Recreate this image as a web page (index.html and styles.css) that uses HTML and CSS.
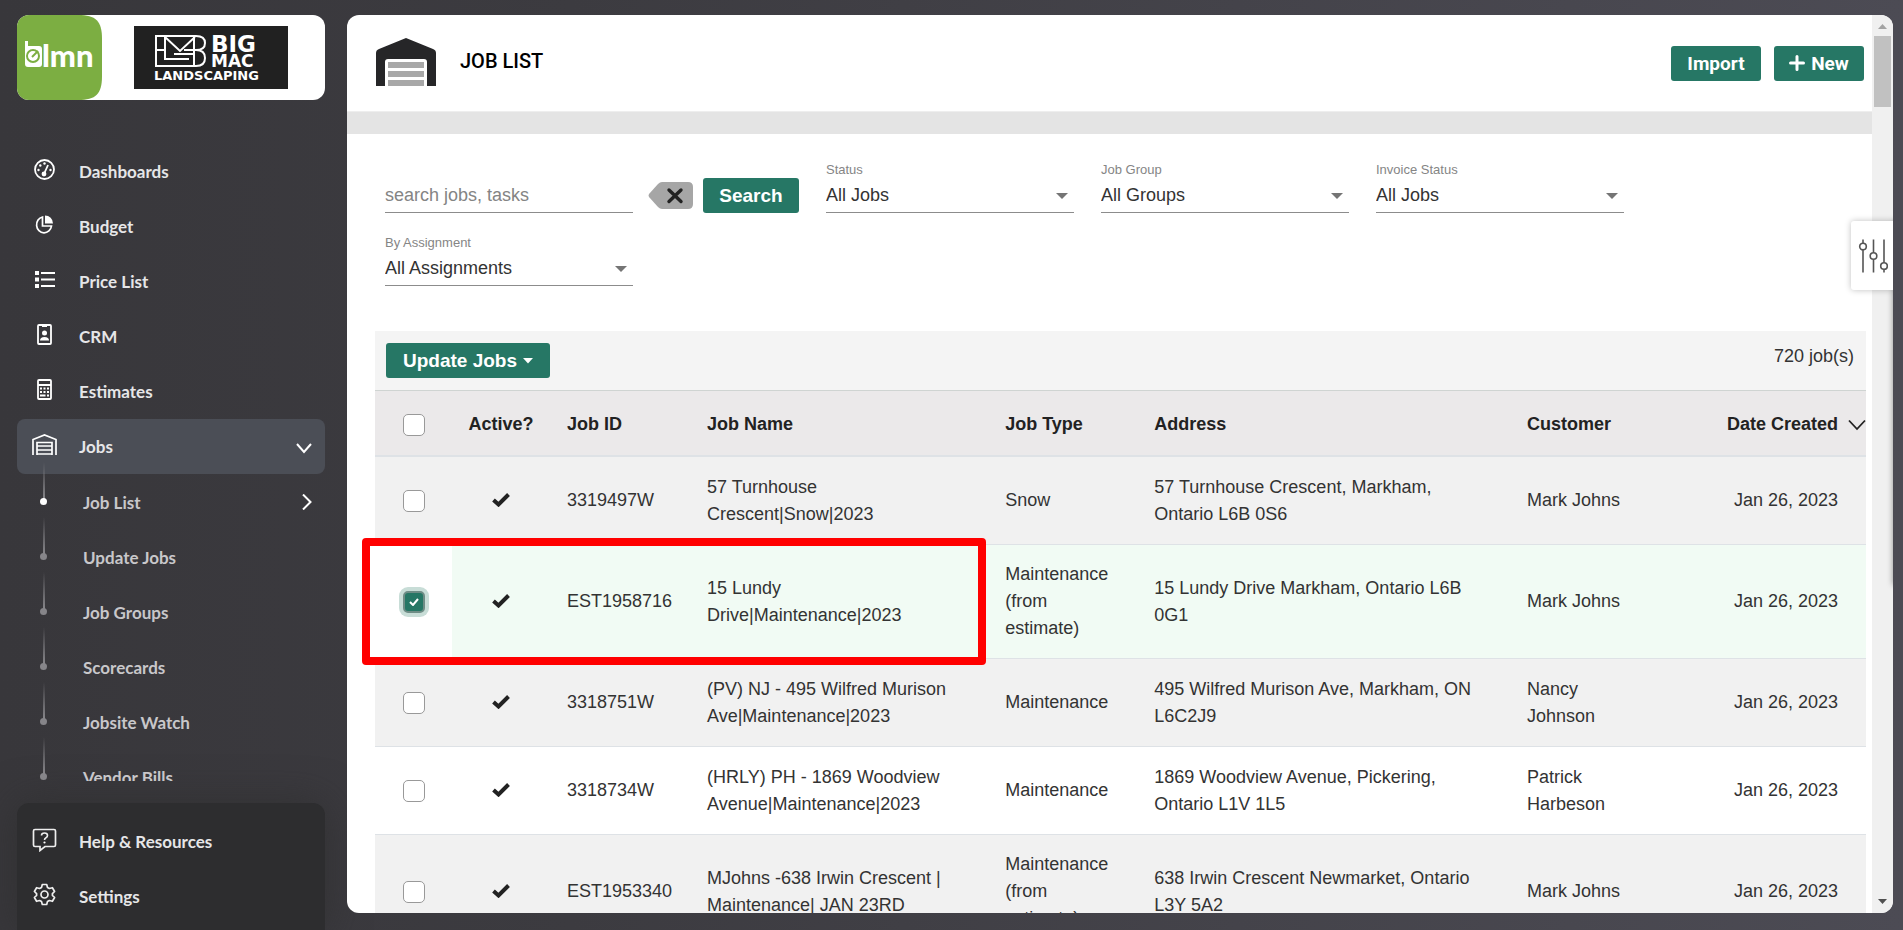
FILE: index.html
```html
<!DOCTYPE html>
<html lang="en">
<head>
    <meta charset="UTF-8">
    <meta name="viewport" content="width=device-width, initial-scale=1.0">
    <title>Job List</title>
    <link rel="stylesheet" href="styles.css">
</head>
<body>
    <div class="sidebar">
        <div class="brand">
            <svg class="brand-lmn" viewBox="0 0 85 85" role="img" aria-label="LMN">
                <path d="M0 0H61C79 0 85 6 85 24V61C85 79 79 85 61 85H0Z" fill="#7cae42"/>
                <path d="M8 26h3v5h11q3 0 3 3v15q0 3-3 3H11q-3 0-3-3z" fill="#fff"/>
                <circle cx="16" cy="41" r="6" fill="none" stroke="#7cae42" stroke-width="2"/>
                <path d="M15 42l6-6" stroke="#7cae42" stroke-width="2"/>
                <text x="25" y="52" class="lmn-text">lmn</text>
            </svg>
            <div class="brand-company">
                <svg width="154" height="63" viewBox="0 0 154 63" role="img" aria-label="Big Mac Landscaping">
                    <rect width="154" height="63" fill="#212121"/>
                    <g fill="none" stroke="#fff" stroke-width="2">
                        <path d="M22 10H62Q71 10 71 17T62 24Q71 24 71 32T62 40H22Z"/>
                        <path d="M22 24H31M50 24H62M31 10V33H55M40 28H60M60 10V40M31 11L46 25L61 11"/>
                    </g>
                    <text x="77" y="26" class="co-big">BIG</text>
                    <text x="77" y="41" class="co-mac">MAC</text>
                    <text x="20" y="54" class="co-land">LANDSCAPING</text>
                </svg>
            </div>
        </div>

        <nav class="menu">
            <a class="menu-item" href="#">
                <svg viewBox="0 0 25 25" class="menu-icon"><circle cx="12.5" cy="12.5" r="9.5" fill="none" stroke="#fff" stroke-width="1.8"/><circle cx="12" cy="17" r="2.4"/><path d="M12 17L16 8" stroke="#fff" stroke-width="1.8"/><circle cx="6.5" cy="13" r="1.2"/><circle cx="8.3" cy="8.5" r="1.2"/><circle cx="12.5" cy="6.5" r="1.2"/><circle cx="18.5" cy="13" r="1.2"/></svg>
                <span>Dashboards</span>
            </a>
            <a class="menu-item" href="#">
                <svg viewBox="0 0 25 25" class="menu-icon"><path d="M13 3.5a8 8 0 0 1 8 8h-8z"/><path d="M10.5 5A7.5 8 0 1 0 19.5 14H10.5z" fill="none" stroke="#fff" stroke-width="1.7"/></svg>
                <span>Budget</span>
            </a>
            <a class="menu-item" href="#">
                <svg viewBox="0 0 25 25" class="menu-icon"><path d="M3 4h4v4H3zM3 10.5h4v4H3zM3 17h4v4H3zM9 5h14v2H9zM9 11.5h14v2H9zM9 18h14v2H9z"/></svg>
                <span>Price List</span>
            </a>
            <a class="menu-item" href="#">
                <svg viewBox="0 0 25 25" class="menu-icon"><rect x="6" y="3" width="13" height="19" rx="1" fill="none" stroke="#fff" stroke-width="1.8"/><path d="M10 3h5v2h-5z"/><circle cx="12.5" cy="11" r="2.5"/><path d="M8 18.5q0-3.5 4.5-3.5t4.5 3.5z"/></svg>
                <span>CRM</span>
            </a>
            <a class="menu-item" href="#">
                <svg viewBox="0 0 25 25" class="menu-icon"><rect x="6" y="3" width="13" height="19" rx="1" fill="none" stroke="#fff" stroke-width="1.8"/><path d="M6 7h13v2H6zM8 10.5h2v2H8zM11.5 10.5h2v2h-2zM15 10.5h2v2h-2zM8 14h2v2H8zM11.5 14h2v2h-2zM15 14h2v2h-2zM8 17.5h5.5v2H8zM15 17.5h2v2h-2z"/></svg>
                <span>Estimates</span>
            </a>
            <a class="menu-item active" href="#">
                <svg viewBox="0 0 25 25" class="menu-icon"><path d="M1 23V7.5L12.5 3L24 7.5V23M5 23V10.5h15V23M5 14h15M5 18h15M5 22h15" fill="none" stroke="#fff" stroke-width="1.7"/></svg>
                <span>Jobs</span>
                <svg viewBox="0 0 16 16" class="menu-arrow"><path d="M1 5L8 13L15 5"/></svg>
            </a>
            <ul class="submenu">
                <li class="current"><a href="#">Job List</a><svg viewBox="0 0 16 16" class="menu-arrow"><path d="M7 0.5L14.5 8L7 15.5"/></svg></li>
                <li><a href="#">Update Jobs</a></li>
                <li><a href="#">Job Groups</a></li>
                <li><a href="#">Scorecards</a></li>
                <li><a href="#">Jobsite Watch</a></li>
                <li><a href="#">Vendor Bills</a></li>
            </ul>
        </nav>

        <div class="menu-footer">
            <a class="menu-item" href="#">
                <svg viewBox="0 0 25 25" class="menu-icon"><path d="M3 2.5h19q1.5 0 1.5 1.5v14q0 1.5-1.5 1.5H13l-5 4v-4H3q-1.5 0-1.5-1.5V4q0-1.5 1.5-1.5z" fill="none" stroke="#eee" stroke-width="1.7"/><path d="M9.5 8.5q0-2.5 3-2.5t3 2.5q0 1.5-1.5 2.2t-1.5 2.3" fill="none" stroke="#eee" stroke-width="1.6"/><circle cx="12.5" cy="15.5" r="1.1"/></svg>
                <span>Help &amp; Resources</span>
            </a>
            <a class="menu-item" href="#">
                <svg viewBox="0 0 25 25" class="menu-icon"><path d="M10.3 2.5h4.4l.8 2.9 1.9 1.1 3-.8 2.2 3.8-2.2 2.1v1.8l2.2 2.1-2.2 3.8-3-.8-1.9 1.1-.8 2.9h-4.4l-.8-2.9-1.9-1.1-3 .8-2.2-3.8 2.2-2.1v-1.8L2.4 9.5l2.2-3.800 3 .8 1.900-1.100z" fill="none" stroke="#eee" stroke-width="1.7" stroke-linejoin="round"/><circle cx="12.5" cy="12.5" r="3.5" fill="none" stroke="#eee" stroke-width="1.7"/></svg>
                <span>Settings</span>
            </a>
        </div>
    </div>

    <div class="main-content">
        <div class="page">
            <div class="page-header">
                <svg class="page-icon" viewBox="0 0 60 48"><path d="M0 48V15q0-3 3-4L30 0l27 11q3 1 3 4v33h-9V24q0-3-3-3H12q-3 0-3 3v24z" fill="#262628"/><path d="M12 24h36v6H12zM12 33h36v6H12zM12 42h36v6H12z" fill="#a8a8a8"/></svg>
                <h1>JOB LIST</h1>
                <button type="button" class="btn">Import</button>
                <button type="button" class="btn"><svg width="16" height="16" viewBox="0 0 16 16"><path d="M8 1.5v13M1.5 8h13" stroke="#fff" stroke-width="3" stroke-linecap="round"/></svg> New</button>
            </div>

            <form class="filters">
                <div class="search-group">
                    <input type="text" class="search-input" placeholder="search jobs, tasks" aria-label="Search jobs, tasks">
                    <button type="button" class="clear-search" aria-label="Clear search">
                        <svg width="45" height="27" viewBox="0 0 45 27"><path d="M14 0H40q5 0 5 5V22q0 5-5 5H14q-2 0-4-2L1 15q-1-1.5 0-3L10 2q2-2 4-2z" fill="#a6a6a6"/><path d="M21 8L33 19.5M33 8L21 19.5" stroke="#222" stroke-width="3.4" stroke-linecap="round"/></svg>
                    </button>
                    <button type="button" class="btn">Search</button>
                </div>
                <div class="field">
                    <label for="status">Status</label>
                    <select id="status"><option>All Jobs</option></select>
                </div>
                <div class="field">
                    <label for="jobGroup">Job Group</label>
                    <select id="jobGroup"><option>All Groups</option></select>
                </div>
                <div class="field">
                    <label for="invoiceStatus">Invoice Status</label>
                    <select id="invoiceStatus"><option>All Jobs</option></select>
                </div>
                <div class="field">
                    <label for="assignment">By Assignment</label>
                    <select id="assignment"><option>All Assignments</option></select>
                </div>
            </form>

            <div class="job-list">
                <div class="toolbar">
                    <button type="button" class="btn">Update Jobs <svg width="10" height="6" viewBox="0 0 10 6"><path d="M0 0h10L5 5.5z" fill="#fff"/></svg></button>
                    <span>720 job(s)</span>
                </div>
                <table class="jobs">
                    <thead>
                        <tr>
                            <th class="col-check"><input type="checkbox" aria-label="Select all jobs"></th>
                            <th class="col-active">Active?</th>
                            <th class="col-id">Job ID</th>
                            <th class="col-name">Job Name</th>
                            <th class="col-type">Job Type</th>
                            <th class="col-address">Address</th>
                            <th class="col-customer">Customer</th>
                            <th class="col-date">Date Created<svg width="18" height="12" viewBox="0 0 18 12"><path d="M1 1.5L9 10L17 1.5" fill="none" stroke="#222" stroke-width="1.8"/></svg></th>
                        </tr>
                    </thead>
                    <tbody>
                        <tr>
                            <td class="col-check"><input type="checkbox" aria-label="Select 3319497W"></td>
                            <td class="col-active"><svg class="tick" viewBox="0 0 18 14"><path d="M1.5 7L6.5 11.5L16.5 1.5"/></svg></td>
                            <td>3319497W</td>
                            <td>57 Turnhouse Crescent|Snow|2023</td>
                            <td>Snow</td>
                            <td>57 Turnhouse Crescent, Markham, Ontario L6B 0S6</td>
                            <td>Mark Johns</td>
                            <td class="col-date">Jan 26, 2023</td>
                        </tr>
                        <tr class="selected">
                            <td class="col-check"><input type="checkbox" checked aria-label="Select EST1958716"><span class="callout"></span></td>
                            <td class="col-active"><svg class="tick" viewBox="0 0 18 14"><path d="M1.5 7L6.5 11.5L16.5 1.5"/></svg></td>
                            <td>EST1958716</td>
                            <td>15 Lundy Drive|Maintenance|2023</td>
                            <td>Maintenance (from estimate)</td>
                            <td>15 Lundy Drive Markham, Ontario L6B 0G1</td>
                            <td>Mark Johns</td>
                            <td class="col-date">Jan 26, 2023</td>
                        </tr>
                        <tr>
                            <td class="col-check"><input type="checkbox" aria-label="Select 3318751W"></td>
                            <td class="col-active"><svg class="tick" viewBox="0 0 18 14"><path d="M1.5 7L6.5 11.5L16.5 1.5"/></svg></td>
                            <td>3318751W</td>
                            <td>(PV) NJ - 495 Wilfred Murison Ave|Maintenance|2023</td>
                            <td>Maintenance</td>
                            <td>495 Wilfred Murison Ave, Markham, ON L6C2J9</td>
                            <td>Nancy Johnson</td>
                            <td class="col-date">Jan 26, 2023</td>
                        </tr>
                        <tr>
                            <td class="col-check"><input type="checkbox" aria-label="Select 3318734W"></td>
                            <td class="col-active"><svg class="tick" viewBox="0 0 18 14"><path d="M1.5 7L6.5 11.5L16.5 1.5"/></svg></td>
                            <td>3318734W</td>
                            <td>(HRLY) PH - 1869 Woodview Avenue|Maintenance|2023</td>
                            <td>Maintenance</td>
                            <td>1869 Woodview Avenue, Pickering, Ontario L1V 1L5</td>
                            <td>Patrick Harbeson</td>
                            <td class="col-date">Jan 26, 2023</td>
                        </tr>
                        <tr>
                            <td class="col-check"><input type="checkbox" aria-label="Select EST1953340"></td>
                            <td class="col-active"><svg class="tick" viewBox="0 0 18 14"><path d="M1.5 7L6.5 11.5L16.5 1.5"/></svg></td>
                            <td>EST1953340</td>
                            <td>MJohns -638 Irwin Crescent | Maintenance| JAN 23RD</td>
                            <td>Maintenance (from estimate)</td>
                            <td>638 Irwin Crescent Newmarket, Ontario L3Y 5A2</td>
                            <td>Mark Johns</td>
                            <td class="col-date">Jan 26, 2023</td>
                        </tr>
                    </tbody>
                </table>
            </div>
        </div>

        <div class="scrollbar">
            <svg width="9" height="5" viewBox="0 0 9 5"><path d="M0 5L4.5 0L9 5z" fill="#a3a3a3"/></svg>
            <div class="thumb"></div>
            <svg class="down" width="9" height="5" viewBox="0 0 9 5"><path d="M0 0L4.5 5L9 0z" fill="#505050"/></svg>
        </div>

        <!-- Slide-out panel, closed: only its shadow and tab show -->
        <div class="side-panel"></div>
        <button type="button" class="panel-tab" aria-label="Filters">
            <svg width="30" height="34" viewBox="0 0 30 34"><g fill="none" stroke="#555" stroke-width="1.6"><path d="M5 0.5V4M5 11V33.5M15.5 0.5V13.5M15.5 20.5V33.5M26 0.5V23.5M26 30.5V33.5"/><circle cx="5" cy="7.5" r="3.3"/><circle cx="15.5" cy="17" r="3.3"/><circle cx="26" cy="27" r="3.3"/></g></svg>
        </button>
    </div>
</body>
</html>
```
FILE: styles.css
```css
* {
    box-sizing: border-box;
}

body {
    margin: 0;
    height: 100vh;
    display: flex;
    overflow: hidden;
    font-family: "Liberation Sans", Arial, sans-serif;
    font-size: 18px;
    color: #333333;
    background: linear-gradient(90deg, #38373b 0%, #3c3b40 30%, #4c4b54 100%);
}

button, input, select {
    font-family: inherit;
    font-size: inherit;
    margin: 0;
}

a {
    color: inherit;
    text-decoration: none;
}

/* Sidebar */
.sidebar {
    width: 347px;
    flex: none;
    padding: 15px 22px 0 17px;
    display: flex;
    flex-direction: column;
    font-family: Lato, sans-serif;
    font-size: 17px;
    font-weight: bold;
}

.brand {
    height: 85px;
    flex: none;
    display: flex;
    overflow: hidden;
    background-color: #ffffff;
    border-radius: 12px;
}

.brand-lmn {
    width: 85px;
    height: 85px;
}

.lmn-text {
    font: 900 31px Lato, sans-serif;
    fill: #ffffff;
}

.brand-company {
    flex: 1;
    padding: 11px 0 0 32px;
}

.brand-company text {
    font-family: "DejaVu Sans", sans-serif;
    font-weight: bold;
    fill: #ffffff;
}

.co-big {
    font-size: 23px;
}

.co-mac {
    font-size: 17px;
}

.co-land {
    font-size: 13px;
}

.menu {
    flex: 1;
    min-height: 0;
    margin: 44px 0 22px;
    overflow: hidden;
}

.menu-item {
    height: 55px;
    padding: 0 13px 0 15px;
    display: flex;
    align-items: center;
    gap: 22px;
    color: #e6e6e8;
    border-radius: 8px;
}

.menu-item.active {
    background-color: #4b4e56;
}

.menu-icon {
    width: 25px;
    height: 29px;
    padding-bottom: 4px;
    fill: #ffffff;
}

.menu-arrow {
    width: 16px;
    height: 16px;
    margin-left: auto;
    fill: none;
    stroke: #ffffff;
    stroke-width: 2;
}

.submenu {
    list-style: none;
    margin: 0;
    padding: 0;
}

.submenu li {
    height: 55px;
    padding: 1px 13px 0 66px;
    display: flex;
    align-items: center;
    position: relative;
    color: #c8c7ca;
}

/* Timeline line and dot */
.submenu li::before {
    content: "";
    position: absolute;
    left: 26px;
    top: -12px;
    width: 2px;
    height: 38px;
    background: linear-gradient(rgba(255, 255, 255, 0), #8a898d);
}

.submenu li::after {
    content: "";
    position: absolute;
    left: 23px;
    top: 24px;
    width: 7px;
    height: 7px;
    border-radius: 50%;
    background-color: #868589;
}

.submenu .current::after {
    background-color: #ffffff;
}

.menu-footer {
    height: 127px;
    flex: none;
    padding-top: 11px;
    background-color: #2d2d2f;
    border-radius: 12px 12px 0 0;
    box-shadow: 0 0 40px rgba(45, 45, 45, 0.7);
}

/* Main pane */
.main-content {
    flex: 1;
    min-width: 0;
    margin: 15px 10px 17px 0;
    display: flex;
    position: relative;
    overflow: hidden;
    background-color: #ffffff;
    border-radius: 12px;
}

.page {
    flex: 1;
    min-width: 0;
}

.page-header {
    height: 97px;
    padding: 0 8px 0 29px;
    display: flex;
    align-items: center;
    gap: 13px;
    border-bottom: 1px solid #eeeeee;
}

.page-icon {
    width: 60px;
    height: 50px;
    padding-bottom: 2px;
}

.page-header h1 {
    flex: 1;
    margin: 0 0 4px 11px;
    font-family: Roboto, sans-serif;
    font-size: 20px;
    font-weight: 500;
    color: #000000;
}

.page-header .btn {
    width: 90px;
    font-family: Roboto, sans-serif;
}

.btn {
    height: 35px;
    display: flex;
    align-items: center;
    justify-content: center;
    gap: 6px;
    padding: 0;
    border: none;
    border-radius: 3px;
    background-color: #267765;
    color: #ffffff;
    font-size: 19px;
    font-weight: bold;
    cursor: pointer;
}

.filters {
    padding: 27px 0 45px 38px;
    border-top: 22px solid #e4e4e4;
    display: flex;
    flex-wrap: wrap;
    align-items: flex-end;
    gap: 21px 27px;
}

.search-group {
    display: flex;
    align-items: center;
}

.search-group .btn {
    width: 96px;
    margin-left: 10px;
}

.search-input,
.field select {
    width: 248px;
    height: 34px;
    padding: 0 0 2px;
    border: none;
    border-bottom: 1px solid #8c8c8c;
    border-radius: 0;
    background-color: transparent;
    color: #333333;
}

.search-input {
    padding: 0;
}

.search-input::placeholder {
    color: #848484;
}

.clear-search {
    height: 27px;
    margin-left: 15px;
    padding: 0;
    border: none;
    background: none;
    cursor: pointer;
}

.field {
    display: flex;
    flex-direction: column;
}

.field label {
    font-size: 13px;
    line-height: 18px;
    color: #858585;
}

.field select {
    appearance: none;
    background: url("data:image/svg+xml,%3Csvg xmlns='http://www.w3.org/2000/svg' width='12' height='6'%3E%3Cpath d='M0 0h12L6 6z' fill='%23757575'/%3E%3C/svg%3E") no-repeat right 6px center;
}

.job-list {
    margin: 0 6px 0 28px;
}

.toolbar {
    height: 60px;
    padding: 12px 12px 0 11px;
    display: flex;
    justify-content: space-between;
    align-items: flex-start;
    background-color: #f4f4f4;
    border-bottom: 1px solid #cfd4d2;
}

.toolbar span {
    line-height: 27px;
}

.toolbar .btn {
    width: 164px;
}

.jobs {
    width: 100%;
    table-layout: fixed;
    border-collapse: separate;
    border-spacing: 0;
    line-height: 27px;
}

.jobs th, .jobs td {
    padding: 16px 17px;
    text-align: left;
    border-bottom: 1px solid #dee2e6;
}

.jobs tbody tr {
    height: 88px;
}

.jobs th {
    padding: 20px 17px 17px;
    background-color: #ebe9ea;
    color: #222222;
    border-bottom-width: 2px;
}

.jobs tbody tr:nth-child(odd) {
    background-color: #f1f1f1;
}

.jobs tbody .selected {
    position: relative;
    background-color: #f1fbf4;
}

.jobs .selected .col-check {
    background-color: #ffffff;
}

.jobs .col-check {
    width: 77px;
    padding-left: 28px;
}

.jobs .col-active {
    width: 98px;
    padding-left: 0;
    padding-right: 0;
    text-align: center;
}

.col-id {
    width: 140px;
}

.col-name {
    width: 20%;
}

.col-type, .col-customer {
    width: 10%;
}

.col-address {
    width: 25%;
}

.jobs .col-date {
    padding-left: 0;
    padding-right: 28px;
    text-align: right;
    white-space: nowrap;
}

.jobs th.col-date {
    padding-right: 0;
}

.col-date svg {
    margin-left: 10px;
    vertical-align: middle;
}

.jobs input {
    appearance: none;
    display: block;
    width: 22px;
    height: 22px;
    border: 1px solid #999999;
    border-radius: 5px;
    background-color: #ffffff;
}

.jobs input:checked {
    border: 2px solid #6f8d86;
    background: #267765 url("data:image/svg+xml,%3Csvg xmlns='http://www.w3.org/2000/svg' width='10' height='8'%3E%3Cpath d='M1 4l3 3 5-6' fill='none' stroke='white' stroke-width='2'/%3E%3C/svg%3E") no-repeat center;
    box-shadow: 0 0 0 4px #c8ddd7;
}

.tick {
    display: block;
    width: 18px;
    height: 16px;
    padding-bottom: 2px;
    margin: 0 auto;
    fill: none;
    stroke: #222222;
    stroke-width: 4;
}

/* Frame round the selected job */
.callout {
    position: absolute;
    top: -7px;
    bottom: -6px;
    left: -13px;
    width: calc(20% + 326px);
    border: 8px solid #ff0000;
    border-radius: 4px;
    pointer-events: none;
}

.scrollbar {
    width: 21px;
    flex: none;
    padding: 9px 2px;
    display: flex;
    flex-direction: column;
    align-items: center;
    background-color: #f0f0f0;
}

.thumb {
    width: 17px;
    height: 71px;
    margin-top: 7px;
    background-color: #c1c1c1;
}

.scrollbar .down {
    margin-top: auto;
}

.side-panel {
    position: absolute;
    top: 206px;
    left: 100%;
    width: 200px;
    height: 364px;
    box-shadow: 0 0 6px rgba(0, 0, 0, 0.4);
}

.panel-tab {
    position: absolute;
    top: 206px;
    right: 0;
    width: 42px;
    height: 69px;
    padding: 0 0 0 2px;
    display: flex;
    align-items: center;
    justify-content: center;
    border: none;
    border-radius: 3px 0 0 3px;
    background-color: #ffffff;
    box-shadow: 0 0 6px rgba(0, 0, 0, 0.25);
    cursor: pointer;
}
```
